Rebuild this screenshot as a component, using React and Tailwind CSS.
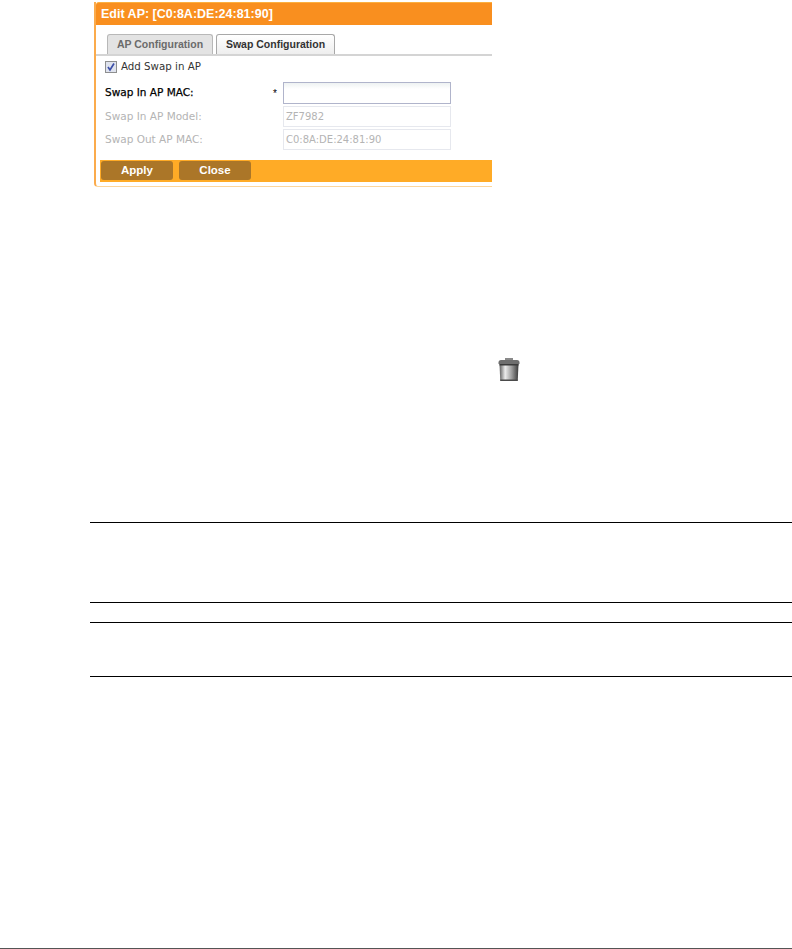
const sans = "font-['Liberation_Sans',Arial,sans-serif]";
const dejavu = "font-['DejaVu_Sans',Verdana,sans-serif]";

function TrashIcon() {
  return (
    <svg width="24" height="26" viewBox="0 0 24 26">
      <defs>
        <linearGradient id="can" x1="0" x2="1" y1="0" y2="0">
          <stop offset="0" stopColor="#5f5f5f" />
          <stop offset="0.3" stopColor="#ececec" />
          <stop offset="0.65" stopColor="#9a9a9a" />
          <stop offset="1" stopColor="#3a3a3a" />
        </linearGradient>
      </defs>
      <rect x="8" y="1" width="8" height="2" fill="#8a8a8a" />
      <path d="M1.5 5.5 Q1.5 3 4 3 H20 Q22.5 3 22.5 5.5 V7 H1.5 Z" fill="#6e6e6e" />
      <path d="M2.5 7 H21.5 L20.8 22.5 Q20.6 24 19 24 H5 Q3.4 24 3.2 22.5 Z" fill="url(#can)" />
      <rect x="2.5" y="7" width="19" height="1.5" fill="#3a3a3a" />
      <rect x="3.2" y="22.5" width="17.6" height="1.5" fill="#4a4a4a" />
    </svg>
  );
}

function FormRow({ label, labelClass, star, inputClass, value, height }) {
  return (
    <div className={`flex items-center ${height}`}>
      <div className={`w-[168px] text-[10.5px] ${dejavu} ${labelClass}`}>{label}</div>
      <div className={`w-[10px] text-[10px] text-black ${sans}`}>{star ? "*" : ""}</div>
      <div className={`w-[168px] h-full flex items-center px-[2px] text-[10px] ${dejavu} text-[#b4b4b4] ${inputClass}`}>{value}</div>
    </div>
  );
}

function EditDialog() {
  return (
    <div className="w-[398px] ml-[94px] mt-[2px] h-[185px] border-l-2 border-b border-l-[#fbab4c] border-b-[#fdd69c] rounded-bl-[4px]">
      <div className={`h-[23px] pl-[5px] bg-[#f98f1f] rounded-tl-[3px] flex items-center text-white font-bold text-[12.5px] ${sans} border-t border-t-[#fcb040]`}>
        Edit AP: [C0:8A:DE:24:81:90]
      </div>
      <div className={`flex items-end h-[31px] pl-[11px] border-b-2 border-b-[#d4d4d4] text-[10.5px] font-bold ${sans}`}>
        <div className="w-[106px] h-[20px] mr-[3px] flex items-center justify-center rounded-t-[3px] border border-b-0 border-[#b8b8b8] bg-[#e3e3e3] text-[#6b6b6b]">
          AP Configuration
        </div>
        <div className="w-[119px] h-[20px] flex items-center justify-center rounded-t-[3px] border border-b-0 border-[#a8a8a8] bg-gradient-to-b from-white to-[#eeeeee] text-[#333333]">
          Swap Configuration
        </div>
      </div>
      <div className={`flex items-center h-[13px] mt-[4px] ml-[9px] text-[10.25px] ${dejavu} text-[#333333]`}>
        <div className="self-end w-[12px] h-[12px] mr-[4px] border border-[#8e8f8f] bg-[#dfe3ee] flex items-center justify-center">
          <svg width="10" height="10" viewBox="0 0 10 10">
            <path d="M2 5 L4 8 L8 1.5" fill="none" stroke="#3c4fa8" strokeWidth="1.7" />
          </svg>
        </div>
        Add Swap in AP
      </div>
      <div className="flex flex-col gap-[2px] mt-[9px] ml-[9px]">
        <FormRow
          label="Swap In AP MAC:"
          labelClass="text-black [-webkit-text-stroke:0.25px_black]"
          star
          height="h-[22px]"
          inputClass="border border-[#b0b4cb] bg-gradient-to-b from-[#eef2f2] to-white to-30%"
        />
        <FormRow
          label="Swap In AP Model:"
          labelClass="text-[#b4b4b4]"
          height="h-[21px]"
          inputClass="border border-[#e6e8ee] bg-white"
          value="ZF7982"
        />
        <FormRow
          label="Swap Out AP MAC:"
          labelClass="text-[#b4b4b4]"
          height="h-[21px]"
          inputClass="border border-[#e6e8ee] bg-white"
          value="C0:8A:DE:24:81:90"
        />
      </div>
      <div className={`flex items-start gap-[6px] h-[22px] mt-[10px] ml-[4px] pl-[1px] pt-[1px] bg-[#ffab26] text-white font-bold text-[11.5px] ${sans}`}>
        <div className="w-[72px] h-[19px] rounded-[3px] bg-[#ab7628] flex items-center justify-center">Apply</div>
        <div className="w-[72px] h-[19px] rounded-[3px] bg-[#ab7628] flex items-center justify-center">Close</div>
      </div>
    </div>
  );
}

export default function App() {
  return (
    <div className="relative w-[792px] h-[949px] bg-white overflow-hidden">
      <EditDialog />
      <div className="ml-[497px] mt-[170px] w-[24px] h-[26px]">
        <TrashIcon />
      </div>
      <div className="ml-[90px] mt-[139px] h-[155px] flex flex-col">
        <div className="h-[80px] border-t border-black" />
        <div className="h-[20px] border-t border-black" />
        <div className="h-[55px] border-t border-b border-black" />
      </div>
      <div className="absolute left-0 right-0 bottom-0 h-[1px] bg-[#555555]" />
    </div>
  );
}
